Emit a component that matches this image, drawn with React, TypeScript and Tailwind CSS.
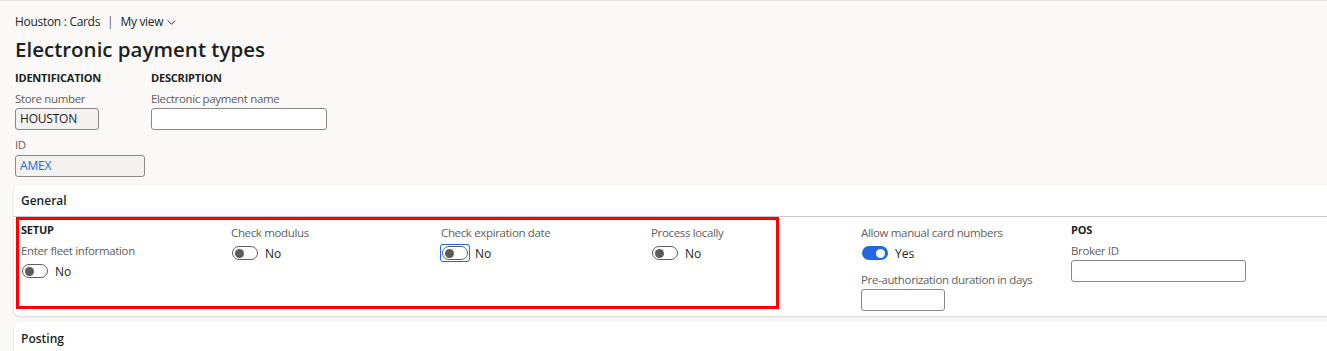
import React from 'react';

const font = { fontFamily: '"Open Sans", "Noto Sans", sans-serif' };

const Toggle = ({ on = false, focus = false }: { on?: boolean; focus?: boolean }) => {
  const track = on ? (
    <div className="w-[26px] h-[14px] rounded-full bg-[#2266e3] flex items-center justify-end px-[3px]">
      <div className="w-[9px] h-[9px] rounded-full bg-white" />
    </div>
  ) : (
    <div className="w-[26px] h-[14px] rounded-full border border-[#605e5c] bg-white flex items-center px-[2px]">
      <div className="w-[9px] h-[9px] rounded-full bg-[#5c5b59]" />
    </div>
  );
  if (focus)
    return <div className="rounded-[3px] border border-[#2266e3] p-[1px] -m-[2px]">{track}</div>;
  return track;
};

const ToggleField = ({ label, value, on, focus }: { label: string; value: string; on?: boolean; focus?: boolean }) => (
  <div className="flex flex-col">
    <Label>{label}</Label>
    <div className="mt-[5px] flex items-center gap-[7px] h-[14px] pl-[1px]">
      <Toggle on={on} focus={focus} />
      <span className="text-[12px] text-[#201f1e] leading-[14px] mt-[2px]">{value}</span>
    </div>
  </div>
);

const Input = ({ w, value, gray, blue }: { w: string; value?: string; gray?: boolean; blue?: boolean }) => (
  <div className={`${w} h-[22px] rounded-[3px] border border-[#8a8886] px-[4px] flex items-center text-[12px] tracking-[-0.2px] ${gray ? 'bg-[#f3f2f1]' : 'bg-white'} ${blue ? 'text-[#2266e3]' : 'text-[#201f1e]'}`}>
    {value}
  </div>
);

const Label = ({ children }: { children: React.ReactNode }) => (
  <div className="h-[16px] leading-[16px] text-[11.5px] tracking-[-0.35px] text-[#605e5c]">{children}</div>
);

const Heading = ({ children }: { children: React.ReactNode }) => (
  <div className="h-[16px] leading-[16px] text-[11px] tracking-[-0.2px] font-bold text-[#201f1e]">{children}</div>
);

export default function App() {
  return (
    <div style={font} className="w-[1327px] h-[351px] overflow-hidden bg-[#faf9f8] border-t border-[#e8e6e4] relative">
      <div className="pl-[15px] pt-[13px]">
        <div className="flex items-center h-[16px] text-[12px] tracking-[-0.3px] text-[#201f1e]">
          <span>Houston : Cards</span>
          <span className="mx-[7px] text-[#605e5c]">|</span>
          <span>My view</span>
          <svg width="11" height="11" viewBox="0 0 12 12" className="ml-[3px]">
            <path d="M2 4l4 4 4-4" fill="none" stroke="#201f1e" strokeWidth="1" />
          </svg>
        </div>
        <h1 className="mt-[6px] h-[26px] leading-[26px] text-[20.5px] font-semibold text-[#201f1e]">Electronic payment types</h1>
        <div className="mt-[8px] flex">
          <div className="w-[136px] flex flex-col">
            <Heading>IDENTIFICATION</Heading>
            <div className="mt-[5px]"><Label>Store number</Label></div>
            <div className="mt-[1px]"><Input w="w-[84px]" value="HOUSTON" gray /></div>
            <div className="mt-[7px]"><Label>ID</Label></div>
            <div className="mt-[2px]"><Input w="w-[130px]" value="AMEX" gray blue /></div>
          </div>
          <div className="flex flex-col">
            <Heading>DESCRIPTION</Heading>
            <div className="mt-[5px]"><Label>Electronic payment name</Label></div>
            <div className="mt-[1px]"><Input w="w-[176px]" /></div>
          </div>
        </div>
      </div>

      <div className="ml-[14px] mt-[8px] w-[1330px] h-[131px] bg-white rounded-[6px] shadow-[0_1px_3px_rgba(0,0,0,0.15)]">
        <div className="h-[32px] pl-[7px] flex items-center text-[12px] font-semibold text-[#201f1e] border-b border-[#c8c6c4]">General</div>
        <div className="pl-[7px] pt-[5px] grid grid-cols-[210px_210px_210px_210px_210px_210px]">
          <div className="flex flex-col">
            <Heading>SETUP</Heading>
            <div className="mt-[5px]"><ToggleField label="Enter fleet information" value="No" /></div>
          </div>
          <div className="pt-[3px]"><ToggleField label="Check modulus" value="No" /></div>
          <div className="pt-[3px]"><ToggleField label="Check expiration date" value="No" focus /></div>
          <div className="pt-[3px]"><ToggleField label="Process locally" value="No" /></div>
          <div className="pt-[3px] flex flex-col">
            <ToggleField label="Allow manual card numbers" value="Yes" on />
            <div className="mt-[12px]"><Label>Pre-authorization duration in days</Label></div>
            <div className="mt-[1px]"><Input w="w-[84px]" /></div>
          </div>
          <div className="flex flex-col">
            <Heading>POS</Heading>
            <div className="mt-[5px]"><Label>Broker ID</Label></div>
            <div className="mt-[1px]"><Input w="w-[175px]" /></div>
          </div>
        </div>
      </div>

      <div className="ml-[14px] mt-[6px] w-[1330px] h-[60px] bg-white rounded-[6px] shadow-[0_1px_3px_rgba(0,0,0,0.15)]">
        <div className="h-[34px] pl-[7px] flex items-center text-[12px] font-semibold text-[#201f1e]">Posting</div>
      </div>

      <div className="absolute left-[16px] top-[216px] w-[763px] h-[92px] border-[3px] border-[#ff0000] pointer-events-none" />
    </div>
  );
}
